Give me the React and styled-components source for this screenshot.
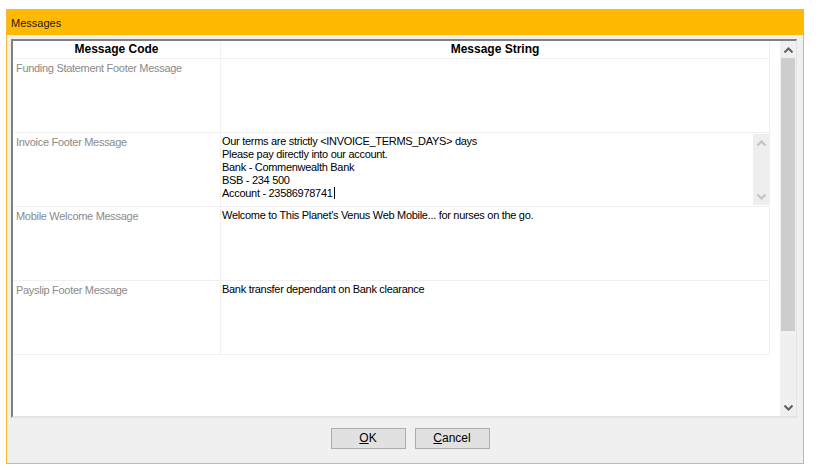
import React from "react";
import styled, { createGlobalStyle } from "styled-components";

const GlobalStyle = createGlobalStyle`
  body {
    margin: 0;
    background: #ffffff;
    font-family: "Liberation Sans", Arial, sans-serif;
  }
`;

const rows = [
  { code: "Funding Statement Footer Message", lines: [] },
  {
    code: "Invoice Footer Message",
    lines: [
      "Our terms are strictly <INVOICE_TERMS_DAYS> days",
      "Please pay directly into our account.",
      "Bank - Commenwealth Bank",
      "BSB - 234 500",
      "Account - 23586978741",
    ],
    editing: true,
  },
  { code: "Mobile Welcome Message", lines: ["Welcome to This Planet's Venus Web Mobile... for nurses on the go."] },
  { code: "Payslip Footer Message", lines: ["Bank transfer dependant on Bank clearance"] },
];

function Chevron({ up, color }) {
  return (
    <svg width="9" height="6" viewBox="0 0 9 6">
      <path
        d={up ? "M0.5 5.5 L4.5 1.5 L8.5 5.5" : "M0.5 0.5 L4.5 4.5 L8.5 0.5"}
        fill="none"
        stroke={color}
        strokeWidth="2"
      />
    </svg>
  );
}

export default function App() {
  return (
    <>
      <GlobalStyle />
      <Window>
        <TitleBar>Messages</TitleBar>
        <Body>
          <Grid>
            <Table>
              <HeaderRow>
                <HeaderCell $w={208}>Message Code</HeaderCell>
                <HeaderCell $w={549}>Message String</HeaderCell>
              </HeaderRow>
              {rows.map((r) => (
                <Row key={r.code}>
                  <CodeCell>{r.code}</CodeCell>
                  <StringCell>
                    <StringText>
                      {r.lines.map((l, i) => (
                        <div key={i}>
                          {l}
                          {r.editing && i === r.lines.length - 1 && <Caret />}
                        </div>
                      ))}
                    </StringText>
                    {r.editing && (
                      <MiniScroll>
                        <Chevron up color="#c2c2c2" />
                        <Chevron color="#c2c2c2" />
                      </MiniScroll>
                    )}
                  </StringCell>
                </Row>
              ))}
            </Table>
            <ScrollBar>
              <ArrowBox>
                <Chevron up color="#606060" />
              </ArrowBox>
              <Thumb />
              <Track />
              <ArrowBox>
                <Chevron color="#606060" />
              </ArrowBox>
            </ScrollBar>
          </Grid>
          <ButtonBar>
            <Button>
              <u>O</u>K
            </Button>
            <Button>
              <u>C</u>ancel
            </Button>
          </ButtonBar>
        </Body>
      </Window>
    </>
  );
}

const Window = styled.div`
  margin: 9px 0 0 6px;
  width: 798px;
  height: 455px;
  box-sizing: border-box;
  border: 1px solid #f2b830;
  display: flex;
  flex-direction: column;
  background: #f0f0f0;
`;

const TitleBar = styled.div`
  height: 25px;
  background: #ffb900;
  color: #1a1a1a;
  font-size: 11px;
  line-height: 26px;
  padding-left: 4px;
  flex-shrink: 0;
`;

const Body = styled.div`
  flex: 1;
  display: flex;
  flex-direction: column;
  padding: 4px 6px 0 4px;
`;

const Grid = styled.div`
  height: 379px;
  box-sizing: border-box;
  border-top: 2px solid #808080;
  border-left: 2px solid #808080;
  border-right: 1px solid #e3e3e3;
  border-bottom: 2px solid #e3e3e3;
  background: #ffffff;
  display: flex;
`;

const Table = styled.div`
  flex: 1;
  display: flex;
  flex-direction: column;
`;

const HeaderRow = styled.div`
  display: flex;
  height: 18px;
  box-sizing: border-box;
  border-bottom: 1px solid #f0f0f0;
`;

const HeaderCell = styled.div`
  width: ${(p) => p.$w}px;
  box-sizing: border-box;
  border-right: 1px solid #f0f0f0;
  text-align: center;
  font-weight: bold;
  font-size: 12px;
  line-height: 17px;
  color: #000;
`;

const Row = styled.div`
  display: flex;
  height: 74px;
  box-sizing: border-box;
  border-bottom: 1px solid #f0f0f0;
  width: 757px;
`;

const CodeCell = styled.div`
  width: 208px;
  box-sizing: border-box;
  border-right: 1px solid #f0f0f0;
  padding: 3px 0 0 3px;
  font-size: 11px;
  letter-spacing: -0.3px;
  line-height: 13px;
  color: #8a8a8a;
`;

const StringCell = styled.div`
  width: 549px;
  box-sizing: border-box;
  border-right: 1px solid #f0f0f0;
  display: flex;
`;

const StringText = styled.div`
  flex: 1;
  padding: 2px 0 0 1px;
  font-size: 11px;
  letter-spacing: -0.3px;
  line-height: 13px;
  color: #000;
`;

const Caret = styled.span`
  display: inline-block;
  width: 1px;
  height: 12px;
  background: #000;
  vertical-align: -2px;
  margin-left: 1px;
`;

const MiniScroll = styled.div`
  width: 16px;
  margin: 1px 0 0;
  height: 71px;
  background: #eeeeee;
  display: flex;
  flex-direction: column;
  align-items: center;
  justify-content: space-between;
  padding: 6px 0 5px;
  box-sizing: border-box;
`;

const ScrollBar = styled.div`
  width: 17px;
  margin-left: 10px;
  background: #f0f0f0;
  display: flex;
  flex-direction: column;
`;

const ArrowBox = styled.div`
  height: 17px;
  display: flex;
  align-items: center;
  justify-content: center;
  flex-shrink: 0;
`;

const Thumb = styled.div`
  height: 273px;
  background: #cdcdcd;
  margin: 0 1px;
`;

const Track = styled.div`
  flex: 1;
`;

const ButtonBar = styled.div`
  display: flex;
  justify-content: center;
  gap: 9px;
  padding: 10px 0 0 12px;
`;

const Button = styled.div`
  width: 75px;
  height: 21px;
  box-sizing: border-box;
  background: #e1e1e1;
  border: 1px solid #adadad;
  font-size: 12px;
  line-height: 19px;
  text-align: center;
  color: #000;
`;
